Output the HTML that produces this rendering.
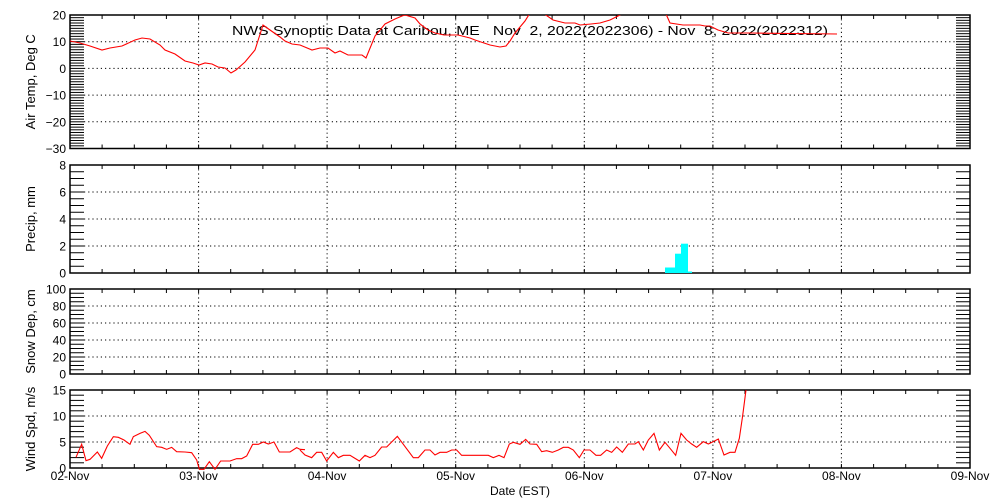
<!DOCTYPE html>
<html><head><meta charset="utf-8"><style>
html,body{margin:0;padding:0;background:#fff;width:1000px;height:500px;overflow:hidden}
svg{display:block;font-family:"Liberation Sans",sans-serif}
.pre{white-space:pre}
</style></head><body>
<svg id="s" width="1000" height="500" xmlns="http://www.w3.org/2000/svg">
<text class="pre" xml:space="preserve" x="232" y="35" font-size="13" textLength="596" lengthAdjust="spacingAndGlyphs">NWS Synoptic Data at Caribou, ME   Nov  2, 2022(2022306) - Nov  8, 2022(2022312)</text>
<g id="g"></g>
<rect x="665" y="267.5" width="10" height="5.5" fill="#00ffff"/>
<rect x="675" y="253.7" width="6" height="19.3" fill="#00ffff"/>
<rect x="681" y="243.7" width="7" height="29.3" fill="#00ffff"/>
<rect x="688" y="271.5" width="4" height="1.5" fill="#00ffff"/>
<defs><clipPath id="c1"><rect x="70" y="15" width="900" height="134"/></clipPath></defs>
<polyline clip-path="url(#c1)" fill="none" stroke="#f00" stroke-width="1.1" points="70,41 80,43 90,46 102,50 110,48 122,46 135,40 142,38 150,39 160,45 165,50 175,54 185,61 193,63 199,65 205,63 212,64 218,67 225,68 231,73 236,70 245,62 255,50 263,25 270,30 280,37 285,41 292,44 300,45 312,50 320,48 328,48 335,53 340,51 348,55 362,55 366,58 375,36 385,24 395,19 402,16 405,15 415,18 420,24 428,30 435,33 444,35 458,35 470,38 475,40 490,45 500,47 506,46 510,41 515,33 525,21 530,13 537,8 543,13 553,20 565,23 575,23 580,25 591,24 600,23 610,20 618,16 625,12 645,8 666,14 670,23 683,25 700,25 705,26 710,26 718,30 728,33 750,33 837,34"/>
<g transform="translate(0,380) scale(0.33333)">
<polyline fill="none" stroke="#f00" stroke-width="1.1" vector-effect="non-scaling-stroke" points="228,232 245,193 258,242 270,238 292,216 305,235 322,198 340,170 355,172 372,180 390,193 400,170 420,160 435,154 448,166 470,200 485,202 500,208 515,202 530,215 555,216 575,218 590,240 598,268 612,268 628,245 645,268 662,243 690,243 710,236 725,236 740,228 758,193 775,193 790,186 805,192 822,186 838,216 870,216 890,203 900,208 915,209"/>
</g>
<g transform="translate(300,385) scale(0.33333)">
<polyline fill="none" stroke="#f00" stroke-width="1.1" vector-effect="non-scaling-stroke" points="0,195 15,210 35,218 50,202 65,202 80,228 100,202 115,218 130,211 150,211 178,228 195,211 210,218 225,211 245,186 260,186 292,154 310,178 340,218 355,218 375,195 390,195 405,210 420,202 440,202 455,195 470,195 485,211 565,211 580,218 597,211 612,218 628,177 640,172 660,178 677,163 690,177 710,178 725,200 740,197 757,202 775,195 790,187 805,187 820,195 838,218 852,195 870,195 888,211 902,211 920,195 935,202 950,186 967,202 985,177 1005,177 1015,170 1030,195 1045,165 1062,145 1078,195 1095,172 1110,190 1127,211 1143,145 1160,165 1175,177 1190,187 1210,170 1225,177 1240,170 1255,162 1272,210 1290,202 1305,202 1318,160 1328,92 1338,15"/>
</g>
</svg>
<script>
var g=document.getElementById('g'),h='';
function L(x1,y1,x2,y2,ex){h+='<line x1="'+x1+'" y1="'+y1+'" x2="'+x2+'" y2="'+y2+'" stroke="#000" '+(ex||'stroke-width="1"')+'/>';}
function T(x,y,t,ex){h+='<text x="'+x+'" y="'+y+'" font-size="12" '+(ex||'')+'>'+t+'</text>';}
var P=[
 {t:15,b:148.5,mn:-30,mx:20,M:10,m:1,ti:'Air Temp, Deg C'},
 {t:165,b:273,mn:0,mx:8,M:2,m:0.5,ti:'Precip, mm'},
 {t:289,b:374,mn:0,mx:100,M:20,m:5,ti:'Snow Dep, cm'},
 {t:390,b:468,mn:0,mx:15,M:5,m:1,ti:'Wind Spd, m/s'}];
var X0=70,X1=970,D=900/7;
P.forEach(function(p){
 function Y(v){return p.b-(v-p.mn)/(p.mx-p.mn)*(p.b-p.t);}
 for(var v=p.mn;v<=p.mx+1e-6;v+=p.m){var y=Y(v).toFixed(2);L(X0,y,84,y);L(956,y,X1,y);}
 for(var v=p.mn;v<=p.mx+1e-6;v+=p.M){var y=Y(v);
  if(v>p.mn&&v<p.mx)L(84,y.toFixed(2),956,y.toFixed(2),'stroke-width="1" stroke-dasharray="1.2,3"');
  T(66,(y+4.5).toFixed(1),(v<0?'\u2212':'')+Math.abs(v),'text-anchor="end"');}
 for(var k=1;k<7;k++){var x=(X0+D*k).toFixed(1);L(x,p.t,x,p.b,'stroke-width="1" stroke-dasharray="1.2,3"');}
 for(var k=1;k<28;k++){var x=(X0+D/4*k).toFixed(1);L(x,p.t,x,p.t+4);L(x,p.b,x,p.b-4);}
 h+='<rect x="'+X0+'" y="'+p.t+'" width="'+(X1-X0)+'" height="'+(p.b-p.t)+'" fill="none" stroke="#000" stroke-width="1.5"/>';
 var cy=(p.t+p.b)/2;
 h+='<text x="35" y="'+cy+'" font-size="13" text-anchor="middle" transform="rotate(-90 35 '+cy+')">'+p.ti+'</text>';
});
var days=['02-Nov','03-Nov','04-Nov','05-Nov','06-Nov','07-Nov','08-Nov','09-Nov'];
days.forEach(function(d,k){T((X0+D*k).toFixed(1),480,d,'text-anchor="middle"');});
T(520,495,'Date (EST)','text-anchor="middle"');
g.innerHTML=h;
</script>
</body></html>
